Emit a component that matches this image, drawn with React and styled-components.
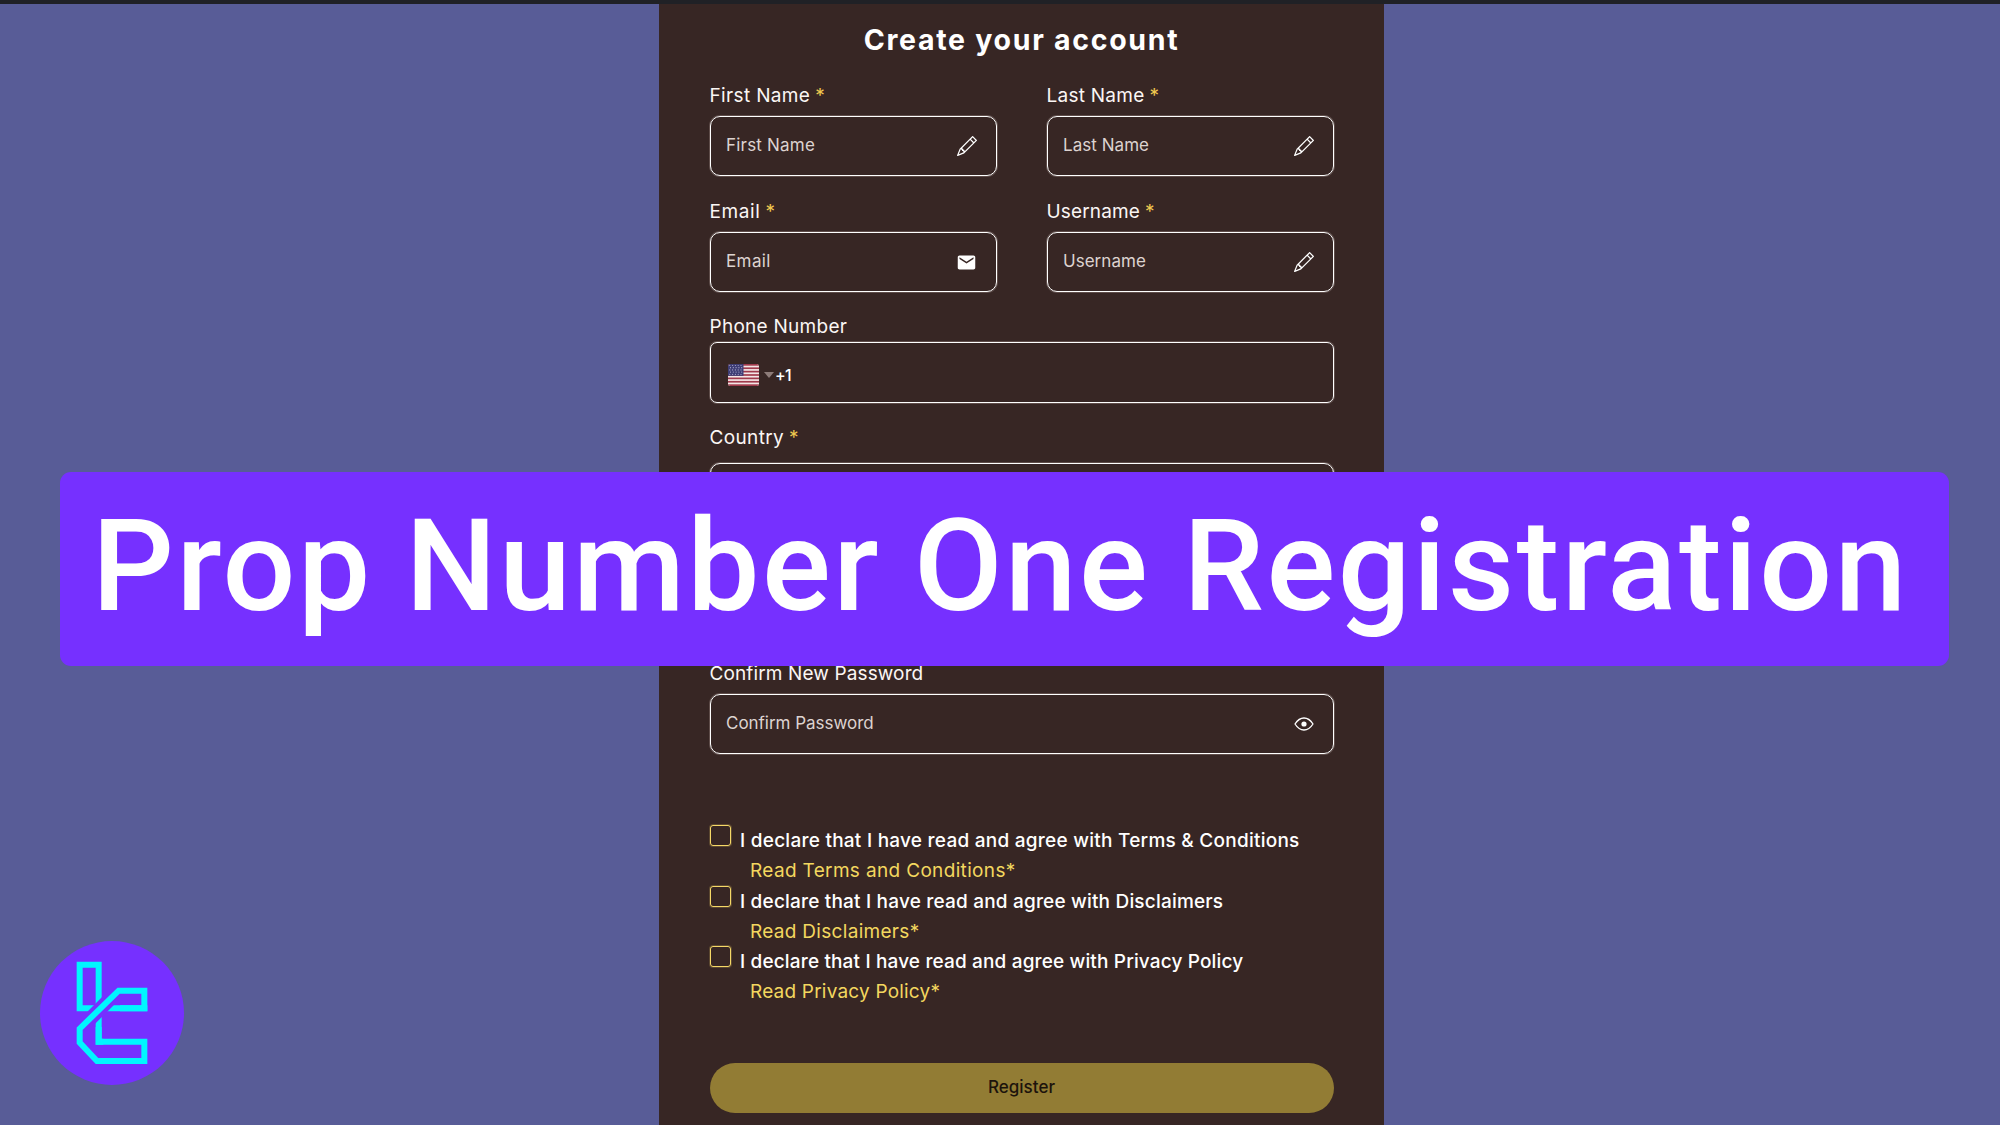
import React from "react";
import styled, { createGlobalStyle } from "styled-components";
import { BsPencil } from "react-icons/bs";
import { MdEmail } from "react-icons/md";

const GlobalStyle = createGlobalStyle`
  *, *::before, *::after { box-sizing: border-box; }
  body { margin: 0; background: #585c97; font-family: Inter, "Liberation Sans", sans-serif; }
`;

const Page = styled.div`
  position: relative;
  width: 2000px;
  height: 1125px;
  overflow: hidden;
  background: #585c97;
  border-top: 4px solid #202126;
  display: flex;
  flex-direction: column;
  align-items: stretch;
`;

const Panel = styled.main`
  width: 725px;
  height: 1121px;
  margin-left: 659px;
  padding: 0 50.5px 0 50.5px;
  background: #372624;
  display: flex;
  flex-direction: column;
`;

const Title = styled.h1`
  margin: 19px 0 23px;
  height: 38px;
  font-size: 28.5px;
  line-height: 34px;
  font-weight: 700;
  letter-spacing: 1.7px;
  text-align: center;
  color: #fff;
`;

const FieldGrid = styled.div`
  display: grid;
  grid-template-columns: 287px 287px;
  column-gap: 50px;
  row-gap: 24px;
`;

const Field = styled.label`
  display: flex;
  flex-direction: column;
  gap: ${(p) => p.$gap ?? 9}px;
  margin-top: ${(p) => p.$top ?? 0}px;
`;

const Caption = styled.span`
  height: 23px;
  font-size: 19px;
  line-height: 23px;
  letter-spacing: ${(p) => p.$track}px;
  color: #fbf6f4;
  white-space: nowrap;
`;

const Required = styled.span`
  margin-left: 5px;
  color: #f0c94f;
`;

const Control = styled.span`
  height: ${(p) => p.$height ?? 60}px;
  padding: 0 19px 0 15.5px;
  border: 1px solid #fff;
  border-radius: ${(p) => p.$radius ?? 10}px;
  box-shadow: 0 0 0 1px rgba(255, 235, 230, 0.2);
  display: flex;
  align-items: center;
  color: #fff;
`;

const Placeholder = styled.span`
  flex: 1;
  padding-bottom: 2px;
  font-size: 17px;
  line-height: 21px;
  letter-spacing: ${(p) => p.$track}px;
  color: #ddd3d0;
`;

const Dial = styled.span`
  display: flex;
  align-items: center;
  padding: 5px 0 0 2px;
  font-size: 16px;
  line-height: 20px;
  font-weight: 500;
  letter-spacing: -0.8px;
`;

const Caret = styled.span`
  width: 0;
  height: 0;
  margin: 0 1px 0 5px;
  border: 5px solid transparent;
  border-top: 6px solid #8d7c79;
  border-bottom: 0;
`;

const Declarations = styled.ul`
  list-style: none;
  margin: 71px 0 0;
  padding: 0;
`;

const Declaration = styled.li`
  font-size: 19px;
  line-height: 31px;
  white-space: nowrap;
`;

const Statement = styled.div`
  height: 30.25px;
  display: flex;
  align-items: flex-start;
  gap: 9.5px;
  font-weight: 450;
  letter-spacing: ${(p) => p.$track}px;
  color: #fff;
`;

const Box = styled.span`
  width: 21px;
  height: 21px;
  border: 1px solid #f5d867;
  border-radius: 3px;
  box-shadow: 0 0 0 1px rgba(245, 216, 103, 0.2);
`;

const ReadLink = styled.a`
  display: block;
  height: 30.25px;
  padding-left: 40.5px;
  color: #f3d75f;
  letter-spacing: ${(p) => p.$track}px;
`;

const Register = styled.button`
  margin-top: 56px;
  height: 50px;
  padding: 0;
  border: 0;
  border-radius: 25px;
  background: #927c34;
  color: #1c130c;
  font: 500 17px/21px Inter, sans-serif;
`;

const Banner = styled.div`
  position: absolute;
  left: 60px;
  top: 468px;
  width: 1889px;
  height: 194px;
  padding: 0 0 6px 32px;
  border-radius: 11px;
  background: #7630ff;
  color: #fff;
  display: flex;
  align-items: center;
  font: 500 128.5px/150px Roboto, sans-serif;
  letter-spacing: 2.4px;
  word-spacing: -1.3px;
  white-space: nowrap;
`;

const Badge = styled.svg`
  position: absolute;
  left: 40px;
  top: 936.5px;
  width: 144px;
  height: 144px;
`;

function Eye() {
  return (
    <svg width="20" height="14" viewBox="0 0 20 14">
      <path d="M1 7C3.5 3.1 6.500 1 10 1s6.500 2.100 9 6c-2.500 3.900-5.500 6-9 6S3.500 10.900 1 7Z" fill="none" stroke="#fff" strokeWidth="1.3" strokeLinejoin="round" />
      <circle cx="10" cy="7" r="2.6" fill="#fff" />
    </svg>
  );
}

function Flag() {
  const stripes = [0, 2, 4, 6, 8, 10, 12];
  const stars = [0, 1, 2, 3, 4];
  return (
    <svg width="31" height="22" viewBox="0 0 31 22">
      <clipPath id="flagEdge"><rect width="31" height="22" rx="2.5" /></clipPath>
      <g clipPath="url(#flagEdge)">
        <rect width="31" height="22" fill="#f3e6e6" />
        {stripes.map((i) => <rect key={i} y={(i * 22) / 13} width="31" height={22 / 13} fill="#a03a4c" />)}
        <rect width="15.500" height="11.850" fill="#3e3d75" />
        {stars.map((r) => stars.map((c) => (
          <circle key={`${r}-${c}`} cx={1.8 + c * 2.8 + (r % 2) * 0.7} cy={1.5 + r * 2.2} r="0.6" fill="#aaa9cb" />
        )))}
      </g>
    </svg>
  );
}

function Logo() {
  return (
    <Badge viewBox="60 62 432 432" fill="none" stroke="#00f6ff" strokeWidth="18">
      <circle cx="276" cy="278" r="216" fill="#7630ff" stroke="none" />
      <path d="M236 262V133H179V264H232" />
      <path d="M240 264H373V255M236 270V364H250" />
      <path d="M300 206L175 331" stroke="#7630ff" strokeWidth="42" />
      <path d="M300 264H373V211H296L179 325V367L231 422H373V364H236V320" />
    </Badge>
  );
}

function TextField({ label, track, hint, hintTrack, icon, required = true, top }) {
  return (
    <Field $top={top}>
      <Caption $track={track}>{label}{required && <Required>*</Required>}</Caption>
      <Control>
        <Placeholder $track={hintTrack}>{hint}</Placeholder>
        {icon}
      </Control>
    </Field>
  );
}

const pencil = <BsPencil size={20} />;

const declarations = [
  { subject: "Terms & Conditions", link: "Terms and Conditions", track: 0.25, linkTrack: 0.34 },
  { subject: "Disclaimers", link: "Disclaimers", track: 0.19, linkTrack: 0.3 },
  { subject: "Privacy Policy", link: "Privacy Policy", track: 0.15, linkTrack: 0.2 },
];

export default function App() {
  return (
    <Page>
      <GlobalStyle />
      <Panel>
        <Title>Create your account</Title>
        <FieldGrid>
          <TextField label="First Name" track={0.35} hint="First Name" hintTrack={0.2} icon={pencil} />
          <TextField label="Last Name" track={0.25} hint="Last Name" hintTrack={0.05} icon={pencil} />
          <TextField label="Email" track={0.6} hint="Email" hintTrack={0.4} icon={<MdEmail size={21} />} />
          <TextField label="Username" track={0.15} hint="Username" hintTrack={0.03} icon={pencil} />
        </FieldGrid>
        <Field $gap={4} $top={23}>
          <Caption $track={0.27}>Phone Number</Caption>
          <Control $radius={7} $height={61}>
            <Dial><Flag /><Caret />+1</Dial>
          </Control>
        </Field>
        <Field $gap={14} $top={23}>
          <Caption $track={0.35}>Country<Required>*</Required></Caption>
          <Control />
        </Field>
        <TextField top={139} required={false} label="Confirm New Password" track={0.12} hint="Confirm Password" hintTrack={-0.03} icon={<Eye />} />
        <Declarations>
          {declarations.map((d) => (
            <Declaration key={d.subject}>
              <Statement $track={d.track}><Box />I declare that I have read and agree with {d.subject}</Statement>
              <ReadLink $track={d.linkTrack}>Read {d.link}*</ReadLink>
            </Declaration>
          ))}
        </Declarations>
        <Register>Register</Register>
      </Panel>
      <Banner>Prop Number One Registration</Banner>
      <Logo />
    </Page>
  );
}
